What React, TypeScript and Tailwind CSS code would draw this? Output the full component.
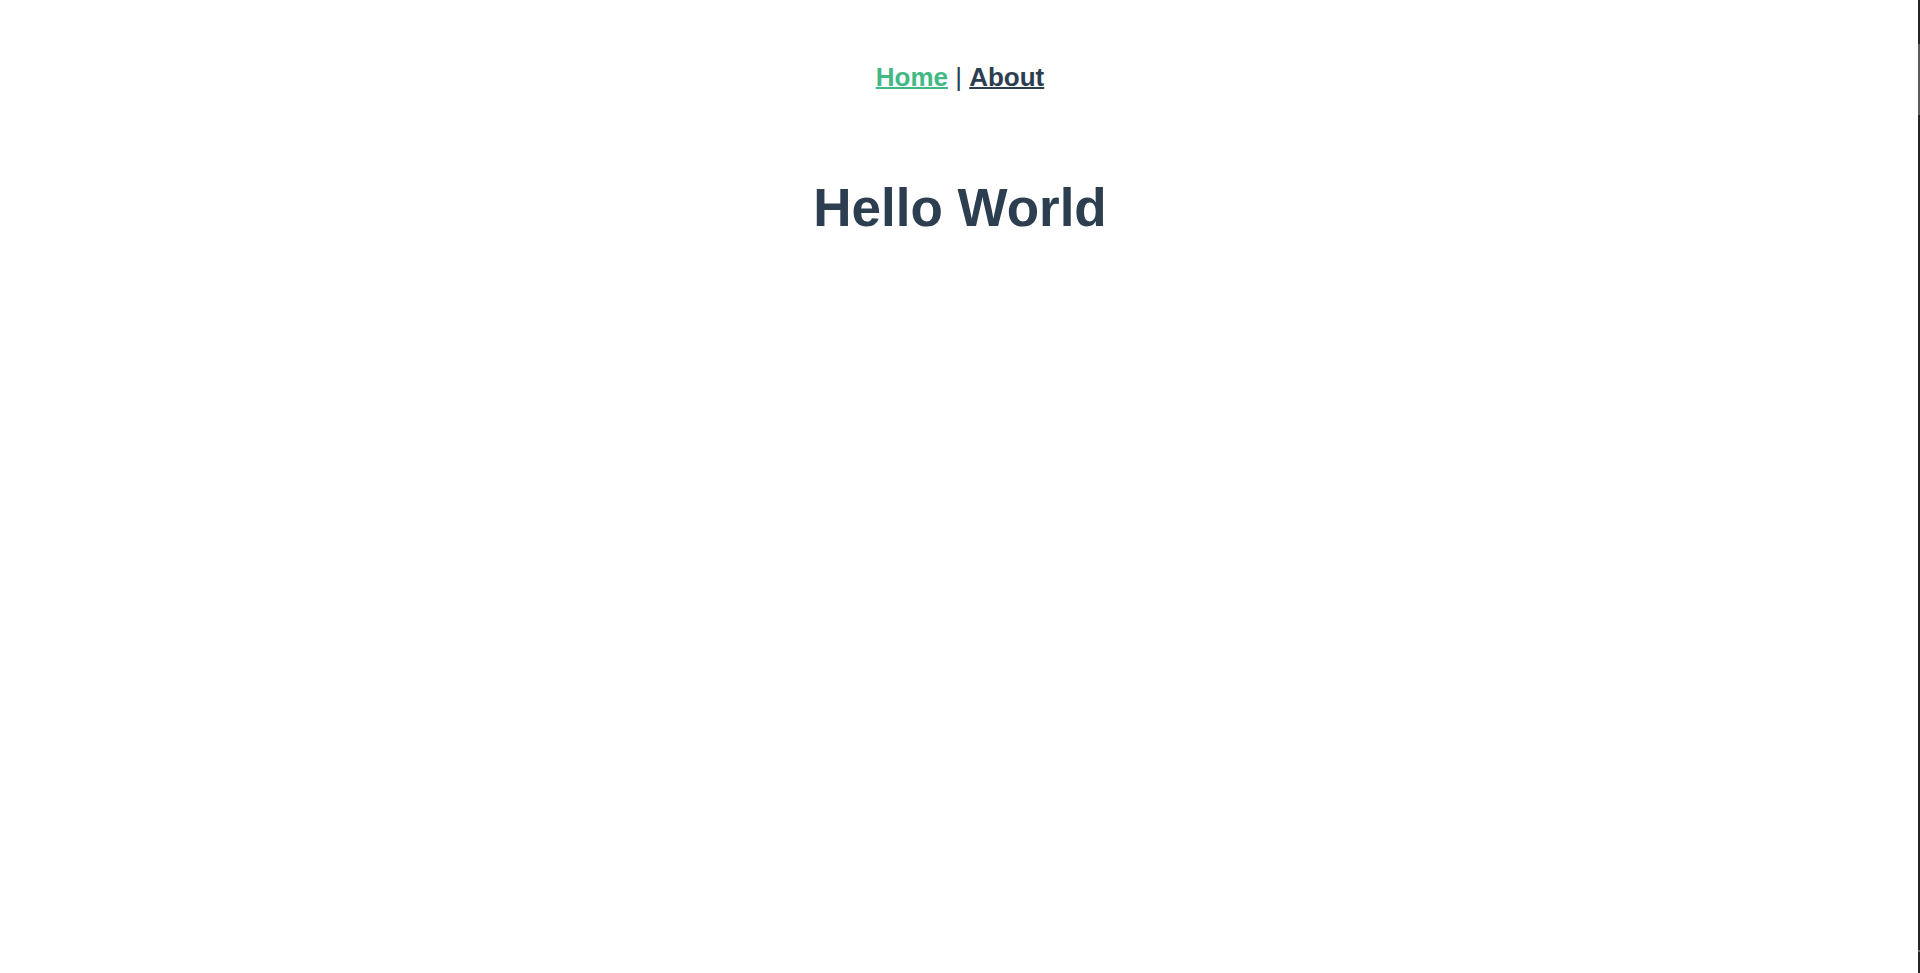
export default function App() {
  return (
    <div className="relative min-h-[973px] bg-white text-center text-[#2c3e50] font-['Liberation_Sans',Arial,sans-serif]">
      <nav className="pt-[62px] pb-[49px] text-[26px] leading-[30px]">
        <a href="#" className="font-bold text-[#42b983] underline decoration-2">
          Home
        </a>
        {" | "}
        <a href="#" className="font-bold text-[#2c3e50] underline decoration-2">
          About
        </a>
      </nav>

      <h1 className="mt-[37px] text-[53px] leading-[60px] font-bold">Hello World</h1>

      {/* right window edge */}
      <div className="absolute right-0 top-0 h-full w-[2px] bg-[#252525]">
        <div className="absolute left-0 top-[44px] h-[71px] w-full bg-[#5c5c5c]" />
        <div className="absolute left-0 top-[950px] h-[2px] w-full bg-[#6a6a6a]" />
      </div>
    </div>
  );
}
